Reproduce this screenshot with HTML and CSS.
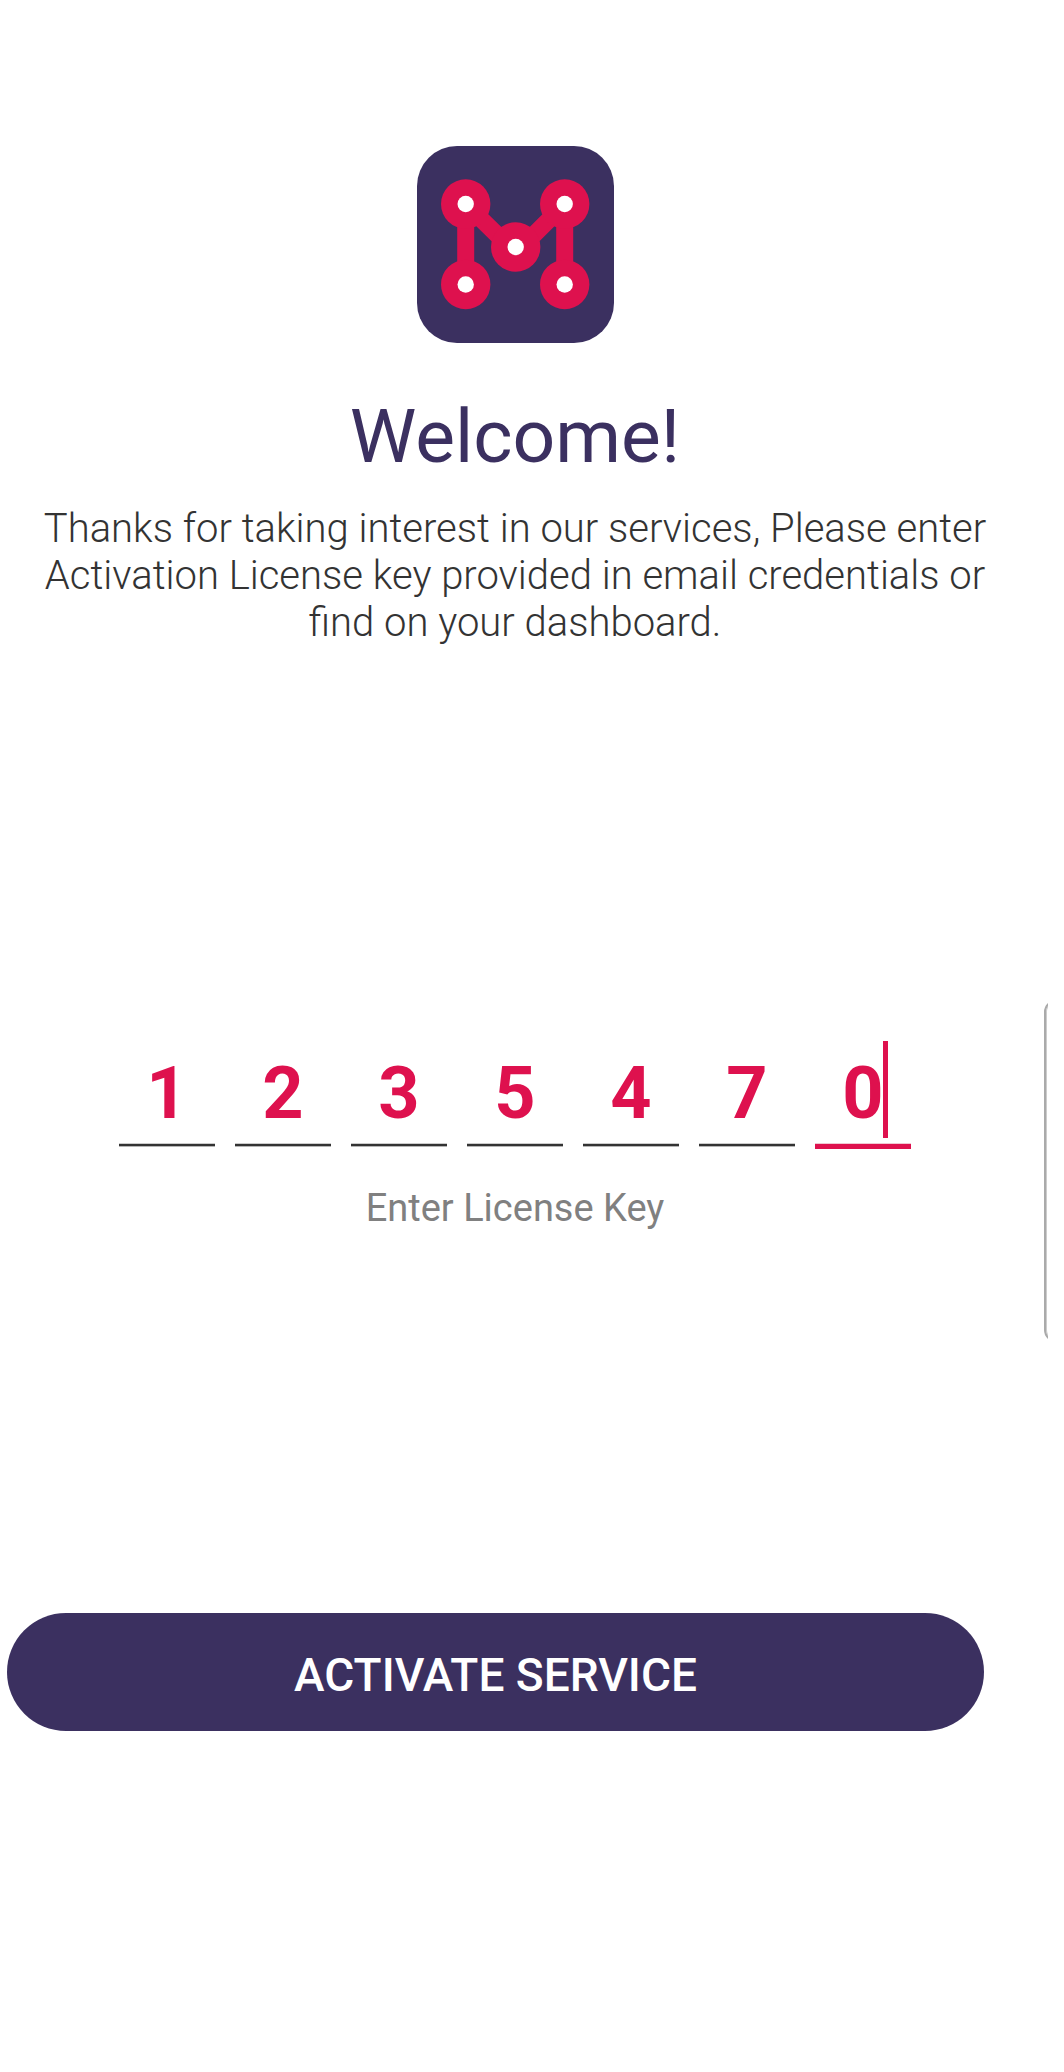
FILE: index.html
```html
<!DOCTYPE html>
<html lang="en">
<head>
    <meta charset="UTF-8">
    <title>Activate Service</title>
    <link rel="stylesheet" href="styles.css">
</head>
<body>
    <div class="screen">
        <div class="content">
            <svg class="logo" viewBox="0 0 197 197">
                <rect width="197" height="197" rx="40" fill="#3b3060"/>
                <path d="M48.7 138.5V58L98.7 107L147.7 58V138.5" fill="none" stroke="#de114e" stroke-width="17"/>
                <g fill="#de114e">
                    <circle cx="48.7" cy="58" r="24.7"/>
                    <circle cx="147.7" cy="58" r="24.7"/>
                    <circle cx="98.7" cy="101" r="24.7"/>
                    <circle cx="48.7" cy="138.5" r="24.7"/>
                    <circle cx="147.7" cy="138.5" r="24.7"/>
                </g>
                <g fill="#fff">
                    <circle cx="48.7" cy="58" r="8.2"/>
                    <circle cx="147.7" cy="58" r="8.2"/>
                    <circle cx="98.7" cy="101" r="8.2"/>
                    <circle cx="48.7" cy="138.5" r="8.2"/>
                    <circle cx="147.7" cy="138.5" r="8.2"/>
                </g>
            </svg>
            <h1>Welcome!</h1>
            <p class="description">Thanks for taking interest in our services, Please enter<br>Activation License key provided in email credentials or<br>find on your dashboard.</p>

            <div class="key-group">
                <div class="digit">1</div>
                <div class="digit">2</div>
                <div class="digit">3</div>
                <div class="digit">5</div>
                <div class="digit">4</div>
                <div class="digit">7</div>
                <div class="digit active">0<span class="cursor"></span></div>
            </div>
            <div class="key-label">Enter License Key</div>
        </div>

        <button class="button">ACTIVATE SERVICE</button>
        <div class="edge-handle"></div>
    </div>
</body>
</html>
```
FILE: styles.css
```css
* {
    box-sizing: border-box;
}
body {
    margin: 0;
    font-family: Roboto, sans-serif;
    background-color: #ffffff;
}
.screen {
    position: relative;
    width: 1048px;
    height: 2072px;
    overflow: hidden;
}
.content {
    display: flex;
    flex-direction: column;
    align-items: center;
    width: 1030px;
    padding-top: 146px;
}
.logo {
    width: 197px;
    height: 197px;
    margin-left: 1px;
}
h1 {
    margin: 49px 0 0;
    font-size: 75px;
    font-weight: 400;
    line-height: 88px;
    color: #3b3060;
}
.description {
    margin: 25px 0 0;
    font-size: 40px;
    font-weight: 300;
    line-height: 47px;
    text-align: center;
    white-space: nowrap;
    color: #333333;
}
.key-group {
    display: flex;
    gap: 20px;
    margin-top: 391px;
}
.digit {
    position: relative;
    width: 96px;
    height: 109px;
    padding-top: 15px;
    font-size: 72px;
    font-weight: 700;
    line-height: 84px;
    text-align: center;
    color: #de114e;
    border-bottom: 2px solid #333333;
    box-shadow: inset 0 -1px #cccccc, 0 1px #b5b5b5;
}
.digit.active {
    height: 112px;
    border-bottom: 5px solid #de114e;
    box-shadow: inset 0 -1px #f0c8d2;
}
.cursor {
    position: absolute;
    left: 68px;
    top: 4px;
    width: 5px;
    height: 97px;
    background-color: #de114e;
}
.key-label {
    margin-top: 36px;
    font-size: 38px;
    line-height: 46px;
    color: #808080;
}
.button {
    display: block;
    width: 977px;
    height: 118px;
    margin: 382px 0 0 7px;
    padding: 6px 0 0;
    border: none;
    border-radius: 59px;
    font-family: inherit;
    font-size: 46px;
    font-weight: 500;
    color: white;
    background-color: #3b3060;
}
.edge-handle {
    position: absolute;
    left: 1044px;
    top: 1000px;
    width: 30px;
    height: 342px;
    border: 2px solid #aaaaaa;
    border-radius: 12px;
    box-shadow: inset 1px 0 #cccccc;
}
```
